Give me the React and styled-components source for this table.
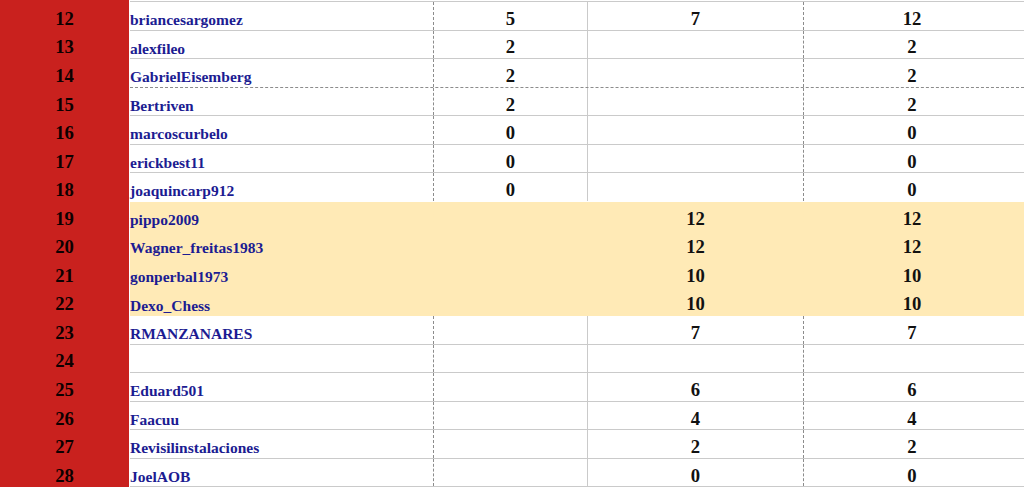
import React from "react";
import styled, { createGlobalStyle, css } from "styled-components";

const GlobalStyle = createGlobalStyle`
  html, body {
    margin: 0;
    padding: 0;
    background: #ffffff;
  }
  body {
    font-family: "Liberation Serif", "Times New Roman", serif;
    overflow: hidden;
  }
`;

const RED = "#c9211e";
const YELLOW = "#ffeab6";
const GRID = "#cacaca";
const DASH = "#8c8c8c";

const Sheet = styled.div`
  display: flex;
  flex-direction: column;
  width: 1024px;
  height: 489px;
  overflow: hidden;
  background: #ffffff;
`;

const Row = styled.div`
  display: flex;
  height: ${(p) => (p.$lead ? "2px" : "28.56px")};
  flex-shrink: 0;
`;

const RankCell = styled.div`
  width: 129px;
  flex-shrink: 0;
  background: ${RED};
  color: #0d0000;
  font-weight: 700;
  font-size: 18.67px;
  line-height: 1;
  display: flex;
  align-items: flex-end;
  justify-content: center;
  padding-bottom: 2px;
  box-sizing: border-box;
`;

const Body = styled.div`
  flex: 1;
  display: grid;
  grid-template-columns: 303px 154px 216px 1fr;
  margin-left: 1px;
  box-sizing: border-box;
  border-bottom: 1px ${(p) => (p.$dashed ? "dashed" : "solid")}
    ${(p) => (p.$dashed ? DASH : GRID)};
  ${(p) =>
    p.$highlight &&
    css`
      background: ${YELLOW};
      border-bottom-color: ${YELLOW};
    `}
  ${(p) =>
    p.$noLine &&
    css`
      border-bottom-color: transparent;
    `}
`;

const NameCell = styled.div`
  display: flex;
  align-items: flex-end;
  padding-bottom: 2px;
  color: #1c1c92;
  font-weight: 700;
  font-size: 15.5px;
  line-height: 1;
  white-space: nowrap;
  box-sizing: border-box;
`;

const ScoreCell = styled.div`
  display: flex;
  align-items: flex-end;
  justify-content: center;
  padding-bottom: 1px;
  color: #111111;
  font-weight: 700;
  font-size: 18.67px;
  line-height: 1;
  box-sizing: border-box;
  border-left: 1px ${(p) => p.$line} ${(p) => (p.$line === "dashed" ? DASH : GRID)};
  ${(p) => p.$last && css`padding-right: 4px;`}
  ${(p) =>
    p.$highlight &&
    css`
      border-left-color: ${YELLOW};
    `}
`;

const rows = [
  { r: 12, name: "briancesargomez", a: "5", b: "7", c: "12" },
  { r: 13, name: "alexfileo", a: "2", b: "", c: "2" },
  { r: 14, name: "GabrielEisemberg", a: "2", b: "", c: "2", dashed: true },
  { r: 15, name: "Bertriven", a: "2", b: "", c: "2" },
  { r: 16, name: "marcoscurbelo", a: "0", b: "", c: "0" },
  { r: 17, name: "erickbest11", a: "0", b: "", c: "0" },
  { r: 18, name: "joaquincarp912", a: "0", b: "", c: "0", noLine: true },
  { r: 19, name: "pippo2009", a: "", b: "12", c: "12", hl: true },
  { r: 20, name: "Wagner_freitas1983", a: "", b: "12", c: "12", hl: true },
  { r: 21, name: "gonperbal1973", a: "", b: "10", c: "10", hl: true },
  { r: 22, name: "Dexo_Chess", a: "", b: "10", c: "10", hl: true },
  { r: 23, name: "RMANZANARES", a: "", b: "7", c: "7" },
  { r: 24, name: "", a: "", b: "", c: "" },
  { r: 25, name: "Eduard501", a: "", b: "6", c: "6" },
  { r: 26, name: "Faacuu", a: "", b: "4", c: "4" },
  { r: 27, name: "Revisilinstalaciones", a: "", b: "2", c: "2" },
  { r: 28, name: "JoelAOB", a: "", b: "0", c: "0" },
];

export default function App() {
  return (
    <>
      <GlobalStyle />
      <Sheet>
        <Row $lead>
          <RankCell />
          <Body />
        </Row>
        {rows.map((row) => (
          <Row key={row.r}>
            <RankCell>{row.r}</RankCell>
            <Body $dashed={row.dashed} $highlight={row.hl} $noLine={row.noLine}>
              <NameCell>{row.name}</NameCell>
              <ScoreCell $line="dashed" $highlight={row.hl}>{row.a}</ScoreCell>
              <ScoreCell $line="solid" $highlight={row.hl}>{row.b}</ScoreCell>
              <ScoreCell $line="dashed" $highlight={row.hl} $last>{row.c}</ScoreCell>
            </Body>
          </Row>
        ))}
      </Sheet>
    </>
  );
}
